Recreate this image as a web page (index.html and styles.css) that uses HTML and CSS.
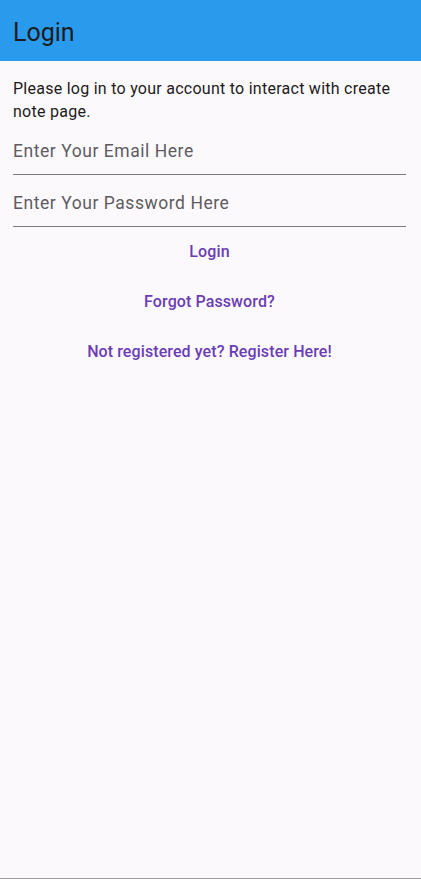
FILE: index.html
```html
<!DOCTYPE html>
<html lang="en">
<head>
<meta charset="utf-8">
<title>Login</title>
<link rel="stylesheet" href="styles.css">
</head>
<body>
<div class="screen">
  <header class="appbar">
    <h1 class="appbar-title">Login</h1>
  </header>
  <main class="content">
    <p class="intro">Please log in to your account to interact with create note page.</p>
    <input class="field" type="email" placeholder="Enter Your Email Here">
    <input class="field" type="password" placeholder="Enter Your Password Here">
    <div class="actions">
      <button class="text-btn" type="button">Login</button>
      <button class="text-btn" type="button">Forgot Password?</button>
      <button class="text-btn" type="button">Not registered yet? Register Here!</button>
    </div>
  </main>
</div>
</body>
</html>
```
FILE: styles.css
```css
* { box-sizing: border-box; }
html, body {
  margin: 0;
  padding: 0;
  height: 100%;
}
body {
  background: #fcf9fc;
  font-family: Roboto, "Noto Sans", sans-serif;
  color: #1d1b20;
}
.screen {
  height: 879px;
  display: flex;
  flex-direction: column;
  border-bottom: 1px solid #a09ea2;
}
.appbar {
  height: 61px;
  background: #2a9bec;
  display: flex;
  align-items: center;
  padding: 0 13px;
  flex-shrink: 0;
}
.appbar-title {
  margin: 0;
  font-size: 25px;
  font-weight: 400;
  color: #1d1b20;
  line-height: 1;
  padding-top: 4px;
}
.content {
  flex: 1;
  padding: 17px 15px 0 13px;
  display: flex;
  flex-direction: column;
}
.intro {
  margin: 0;
  font-size: 16px;
  line-height: 22.5px;
  letter-spacing: 0.26px;
}
.field {
  display: block;
  width: 100%;
  height: 52px;
  padding: 5px 0 0 0;
  margin: 0;
  border: 0;
  border-bottom: 1px solid #7e7a82;
  background: transparent;
  font-family: Roboto, "Noto Sans", sans-serif;
  font-size: 17.5px;
  letter-spacing: 0.55px;
  color: #1d1b20;
  outline: none;
}
.field::placeholder {
  color: #5e5c61;
  opacity: 1;
}
.actions {
  display: flex;
  flex-direction: column;
  align-items: center;
}
.text-btn {
  height: 50px;
  padding: 0 12px 1px;
  border: 0;
  background: transparent;
  font-family: Roboto, "Noto Sans", sans-serif;
  font-size: 16px;
  font-weight: 500;
  color: #6a3db5;
  letter-spacing: 0.1px;
  cursor: pointer;
}
```
